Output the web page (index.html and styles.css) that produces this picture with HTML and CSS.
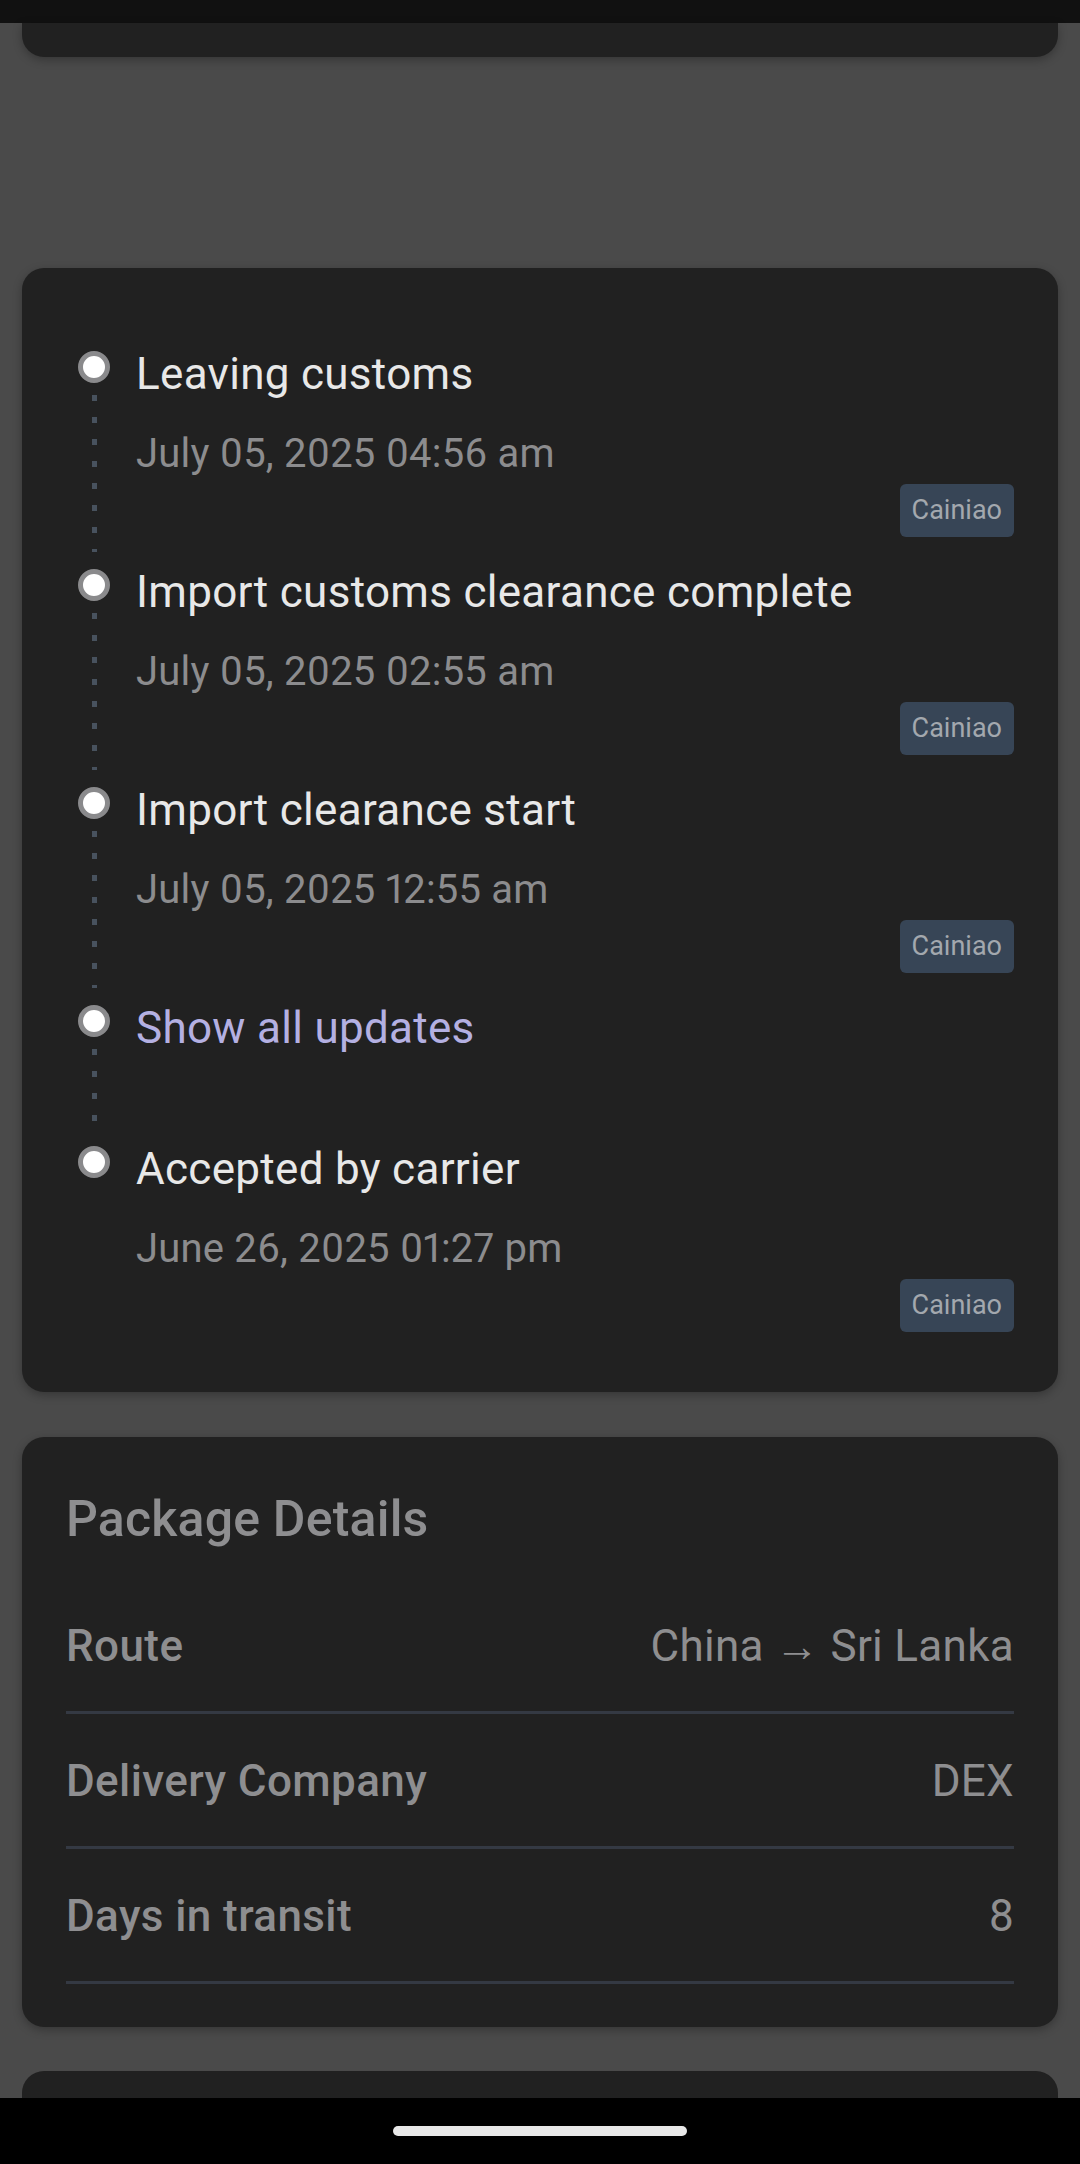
FILE: index.html
```html
<!DOCTYPE html>
<html lang="en">
<head>
<meta charset="utf-8">
<title>Tracking</title>
<link rel="stylesheet" href="styles.css">
</head>
<body>
<div class="status-bar"></div>
<main class="page">
  <section class="card card-clipped-top"></section>

  <div class="spacer"></div>

  <section class="card timeline-card">
    <ol class="timeline">
      <li class="event">
        <div class="rail"><span class="dot"></span><span class="line"></span></div>
        <div class="event-body">
          <div class="event-title">Leaving customs</div>
          <div class="event-date">July 05, 2025 04:56 am</div>
          <div class="event-meta"><span class="badge">Cainiao</span></div>
        </div>
      </li>
      <li class="event">
        <div class="rail"><span class="dot"></span><span class="line"></span></div>
        <div class="event-body">
          <div class="event-title">Import customs clearance complete</div>
          <div class="event-date">July 05, 2025 02:55 am</div>
          <div class="event-meta"><span class="badge">Cainiao</span></div>
        </div>
      </li>
      <li class="event">
        <div class="rail"><span class="dot"></span><span class="line"></span></div>
        <div class="event-body">
          <div class="event-title">Import clearance start</div>
          <div class="event-date">July 05, 2025 12:55 am</div>
          <div class="event-meta"><span class="badge">Cainiao</span></div>
        </div>
      </li>
      <li class="event event-more">
        <div class="rail"><span class="dot"></span><span class="line line-short"></span></div>
        <div class="event-body">
          <div class="event-title link">Show all updates</div>
        </div>
      </li>
      <li class="event event-last">
        <div class="rail"><span class="dot"></span></div>
        <div class="event-body">
          <div class="event-title">Accepted by carrier</div>
          <div class="event-date">June 26, 2025 01:27 pm</div>
          <div class="event-meta"><span class="badge">Cainiao</span></div>
        </div>
      </li>
    </ol>
  </section>

  <section class="card details-card">
    <h2 class="details-title">Package Details</h2>
    <dl class="details">
      <div class="row"><dt>Route</dt><dd>China → Sri Lanka</dd></div>
      <div class="row"><dt>Delivery Company</dt><dd>DEX</dd></div>
      <div class="row"><dt>Days in transit</dt><dd>8</dd></div>
    </dl>
  </section>

  <section class="card card-clipped-bottom"></section>
</main>
<nav class="nav-bar"><span class="home-pill"></span></nav>
</body>
</html>
```

FILE: styles.css
```css
* { box-sizing: border-box; }

html, body {
  margin: 0;
  padding: 0;
}

body {
  width: 1080px;
  height: 2164px;
  overflow: hidden;
  background: #4a4a4a;
  font-family: Roboto, "Noto Sans", sans-serif;
  color: #e6e6e6;
}

.status-bar {
  height: 23px;
  background: #111111;
}

.page {
  display: flex;
  flex-direction: column;
  padding: 0 22px;
}

.card {
  background: #212121;
  border-radius: 22px;
  box-shadow: 0 3px 10px rgba(0, 0, 0, 0.28);
}

.card-clipped-top {
  height: 34px;
  border-radius: 0 0 22px 22px;
}

.spacer {
  height: 211px;
}

.card-clipped-bottom {
  height: 27px;
  margin-top: 44px;
  border-radius: 22px 22px 0 0;
  box-shadow: none;
}

/* Timeline */
.timeline-card {
  height: 1124px;
  padding: 80px 44px 0 44px;
}

.timeline {
  list-style: none;
  margin: 0;
  padding: 0;
}

.event {
  display: flex;
  min-height: 218px;
}

.event-more {
  min-height: 138px;
}

.rail {
  width: 56px;
  flex: none;
  display: flex;
  flex-direction: column;
  align-items: center;
  padding-top: 3px;
}

.dot {
  width: 32px;
  height: 32px;
  border-radius: 50%;
  background: #ffffff;
  border: 5px solid #8a8a8c;
  flex: none;
}

.line {
  width: 5px;
  flex: 1;
  margin: 12px 0 14px;
  background: repeating-linear-gradient(to bottom, #48525e 0 6px, transparent 6px 22px);
}

.line-short {
  flex: none;
  height: 80px;
}

.event-body {
  flex: 1;
  margin-left: 14px;
  display: flex;
  flex-direction: column;
}

.event-title {
  font-size: 44px;
  line-height: 52px;
  letter-spacing: 0.3px;
  color: #e8e8e8;
}

.event-title.link {
  color: #b4b0e2;
}

.event-date {
  margin-top: 30px;
  font-size: 40px;
  line-height: 48px;
  letter-spacing: 0.2px;
  font-variant-numeric: proportional-nums;
  color: #8c8c8e;
}

.event-meta {
  display: flex;
  justify-content: flex-end;
  margin-top: 6px;
}

.badge {
  display: inline-block;
  height: 53px;
  padding: 0 12px;
  border-radius: 6px;
  background: #374556;
  color: #a3a8ae;
  font-size: 27px;
  line-height: 53px;
}

/* Package details */
.details-card {
  margin-top: 45px;
  height: 590px;
  padding: 52px 44px 0 44px;
}

.details-title {
  margin: 0 0 30px;
  font-size: 50px;
  line-height: 60px;
  font-weight: 500;
  letter-spacing: 0.2px;
  color: #8e8e90;
}

.details {
  margin: 0;
}

.row {
  display: flex;
  justify-content: space-between;
  align-items: center;
  padding: 41px 0 39px;
  border-bottom: 3px solid #343943;
}

.row dt {
  font-size: 44px;
  line-height: 52px;
  font-weight: 500;
  letter-spacing: 0.4px;
  color: #8e8e90;
}

.row dd {
  margin: 0;
  font-size: 44px;
  line-height: 52px;
  letter-spacing: 0.3px;
  color: #8e8e90;
}

/* System nav */
.nav-bar {
  height: 66px;
  background: #000000;
  display: flex;
  justify-content: center;
  padding-top: 28px;
}

.home-pill {
  width: 294px;
  height: 10px;
  border-radius: 5px;
  background: #e8e8e8;
}
```
